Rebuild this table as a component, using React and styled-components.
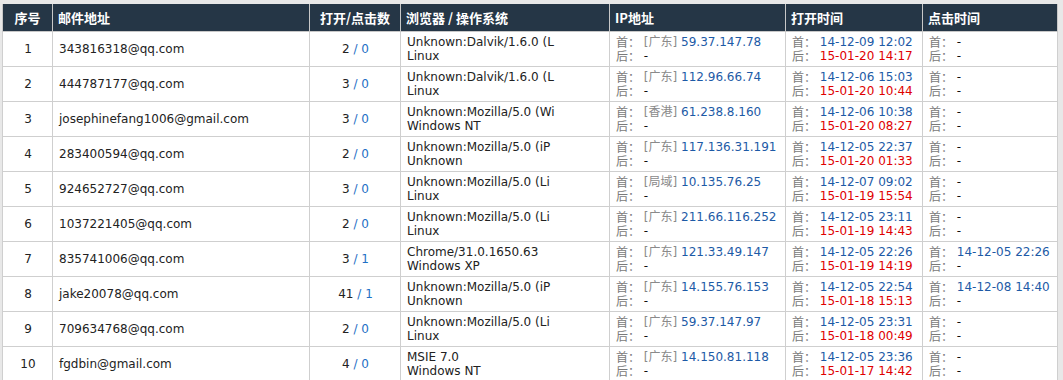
import React from 'react';
import styled, { createGlobalStyle } from 'styled-components';

const rows = [
  ['343816318@qq.com', 2, 0, 'Unknown:Dalvik/1.6.0 (L', 'Linux', '广东', '59.37.147.78', '14-12-09 12:02', '15-01-20 14:17', '-'],
  ['444787177@qq.com', 3, 0, 'Unknown:Dalvik/1.6.0 (L', 'Linux', '广东', '112.96.66.74', '14-12-06 15:03', '15-01-20 10:44', '-'],
  ['josephinefang1006@gmail.com', 3, 0, 'Unknown:Mozilla/5.0 (Wi', 'Windows NT', '香港', '61.238.8.160', '14-12-06 10:38', '15-01-20 08:27', '-'],
  ['283400594@qq.com', 2, 0, 'Unknown:Mozilla/5.0 (iP', 'Unknown', '广东', '117.136.31.191', '14-12-05 22:37', '15-01-20 01:33', '-'],
  ['924652727@qq.com', 3, 0, 'Unknown:Mozilla/5.0 (Li', 'Linux', '局域', '10.135.76.25', '14-12-07 09:02', '15-01-19 15:54', '-'],
  ['1037221405@qq.com', 2, 0, 'Unknown:Mozilla/5.0 (Li', 'Linux', '广东', '211.66.116.252', '14-12-05 23:11', '15-01-19 14:43', '-'],
  ['835741006@qq.com', 3, 1, 'Chrome/31.0.1650.63', 'Windows XP', '广东', '121.33.49.147', '14-12-05 22:26', '15-01-19 14:19', '14-12-05 22:26'],
  ['jake20078@qq.com', 41, 1, 'Unknown:Mozilla/5.0 (iP', 'Unknown', '广东', '14.155.76.153', '14-12-05 22:54', '15-01-18 15:13', '14-12-08 14:40'],
  ['709634768@qq.com', 2, 0, 'Unknown:Mozilla/5.0 (Li', 'Linux', '广东', '59.37.147.97', '14-12-05 23:31', '15-01-18 00:49', '-'],
  ['fgdbin@gmail.com', 4, 0, 'MSIE 7.0', 'Windows NT', '广东', '14.150.81.118', '14-12-05 23:36', '15-01-17 14:42', '-'],
];

const columns = [
  { title: '序号', width: 50, center: true },
  { title: '邮件地址', width: 257 },
  { title: '打开/点击数', width: 91, center: true },
  { title: '浏览器 / 操作系统', width: 209 },
  { title: 'IP地址', width: 176 },
  { title: '打开时间', width: 137 },
  { title: '点击时间', width: 135 },
];

export default function App() {
  return (
    <>
      <GlobalStyle />
      <Page>
        <Table>
          <colgroup>
            {columns.map((c) => (
              <col key={c.title} style={{ width: c.width }} />
            ))}
          </colgroup>
          <thead>
            <tr>
              {columns.map((c) => (
                <Th key={c.title} $center={c.center}>{c.title}</Th>
              ))}
            </tr>
          </thead>
          <tbody>
            {rows.map((r, i) => (
              <tr key={i}>
                <Td $center>{i + 1}</Td>
                <Td>{r[0]}</Td>
                <Td $center>
                  {r[1]} <Clicks>/ {r[2]}</Clicks>
                </Td>
                <Td>
                  <Line>{r[3]}</Line>
                  <Line>{r[4]}</Line>
                </Td>
                <Td>
                  <Line>
                    <Label>首：</Label> <Region>[{r[5]}]</Region> <Ip>{r[6]}</Ip>
                  </Line>
                  <Line>
                    <Label>后：</Label> <Dash>-</Dash>
                  </Line>
                </Td>
                <Td>
                  <Line>
                    <Label>首：</Label> <Time>{r[7]}</Time>
                  </Line>
                  <Line>
                    <Label>后：</Label> <Time $last>{r[8]}</Time>
                  </Line>
                </Td>
                <Td>
                  <Line>
                    <Label>首：</Label>{' '}
                    {r[9] === '-' ? <Dash>-</Dash> : <Time>{r[9]}</Time>}
                  </Line>
                  <Line>
                    <Label>后：</Label> <Dash>-</Dash>
                  </Line>
                </Td>
              </tr>
            ))}
          </tbody>
        </Table>
      </Page>
    </>
  );
}

const GlobalStyle = createGlobalStyle`
  body {
    margin: 0;
    background: #e8e8e8;
  }
`;

const Page = styled.div`
  padding: 4px 0 0 2px;
  font-family: "DejaVu Sans", Verdana, "Noto Sans CJK SC", sans-serif;
  font-size: 12px;
  color: #222;
  `;

const Table = styled.table`
  width: 1056px;
  table-layout: fixed;
  border-collapse: collapse;
  background: #fff;
  `;

const Th = styled.th`
  height: 27px;
  padding: 0 5px;
  background: #253646;
  color: #fff;
  font-family: "Noto Sans CJK SC", sans-serif;
  font-size: 13px;
  font-weight: 700;
  text-align: ${(p) => (p.$center ? 'center' : 'left')};
  border: 1px solid #c8c8c8;
  border-top: none;
  white-space: nowrap;
  `;

const Td = styled.td`
  height: 30px;
  padding: 2px 5px 2px 6px;
  border: 1px solid #cfcfcf;
  text-align: ${(p) => (p.$center ? 'center' : 'left')};
  vertical-align: middle;
  line-height: 14px;
  white-space: nowrap;
  overflow: hidden;
  `;

const Line = styled.div`
  line-height: 14px;
  `;

const Clicks = styled.span`
  color: #1f6fc5;
  `;

const Label = styled.span`
  color: #7a7a7a;
  font-family: "Noto Sans CJK SC", sans-serif;
  line-height: 14px;
  vertical-align: top;
  `;

const Region = styled.span`
  color: #8a8a8a;
  font-family: "DejaVu Sans", "Noto Sans CJK SC", sans-serif;
  `;

const Ip = styled.span`
  color: #1d5aa6;
  `;

const Time = styled.span`
  color: ${(p) => (p.$last ? '#e00000' : '#1d5aa6')};
  `;

const Dash = styled.span`
  color: #111;
  `;
